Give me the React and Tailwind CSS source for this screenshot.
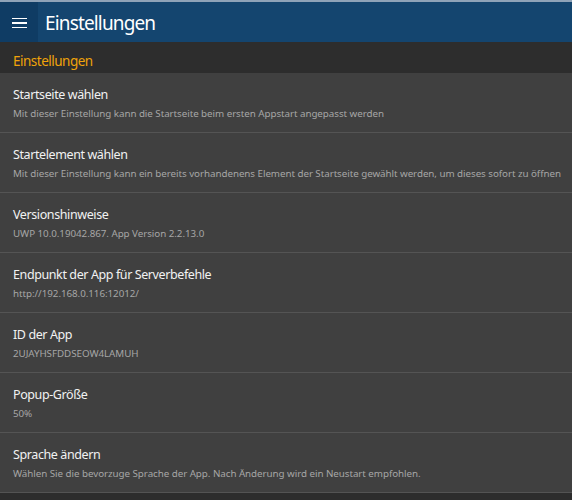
import React from "react";

const items = [
  ["Startseite wählen", "Mit dieser Einstellung kann die Startseite beim ersten Appstart angepasst werden"],
  ["Startelement wählen", "Mit dieser Einstellung kann ein bereits vorhandenens Element der Startseite gewählt werden, um dieses sofort zu öffnen"],
  ["Versionshinweise", "UWP 10.0.19042.867. App Version 2.2.13.0"],
  ["Endpunkt der App für Serverbefehle", "http://192.168.0.116:12012/"],
  ["ID der App", "2UJAYHSFDDSEOW4LAMUH"],
  ["Popup-Größe", "50%"],
  ["Sprache ändern", "Wählen Sie die bevorzuge Sprache der App. Nach Änderung wird ein Neustart empfohlen."],
];

export default function App() {
  return (
    <div
      className="w-[572px] h-[500px] overflow-hidden bg-[#2d2d2d] flex flex-col"
      style={{ fontFamily: '"Noto Sans", "Open Sans", sans-serif' }}
    >
      <div className="h-[2px] bg-[#8fa3b8]" />
      <div className="h-[40px] flex bg-[#14456f]">
        <div className="w-[38px] bg-[#0f3c64] flex flex-col items-center justify-center gap-[3px] pt-[2px]">
          <div className="w-[15px] h-[1.5px] bg-white" />
          <div className="w-[15px] h-[1.5px] bg-white" />
          <div className="w-[15px] h-[1.5px] bg-white" />
        </div>
        <div className="pl-[7px] flex items-center text-[19px] tracking-[-0.85px] text-white leading-none pt-[3px]">Einstellungen</div>
      </div>
      <div className="h-[31px] flex items-center px-[13px] text-[13.5px] tracking-[-0.5px] text-[#f0a30a] pt-[7px]">Einstellungen</div>
      <div className="flex flex-col bg-[#404040]">
        {items.map(([t, s], i) => (
          <div key={i} className="h-[60px] border-b border-[#545454] flex flex-col justify-center px-[13px] pt-[2px]">
            <div className="text-[12.5px] tracking-[-0.4px] text-[#f2f2f2] leading-[16px]">{t}</div>
            <div className="text-[9.8px] tracking-[-0.05px] text-[#a6a6a6] leading-[14px] mt-[4px] whitespace-nowrap">{s}</div>
          </div>
        ))}
      </div>
    </div>
  );
}
